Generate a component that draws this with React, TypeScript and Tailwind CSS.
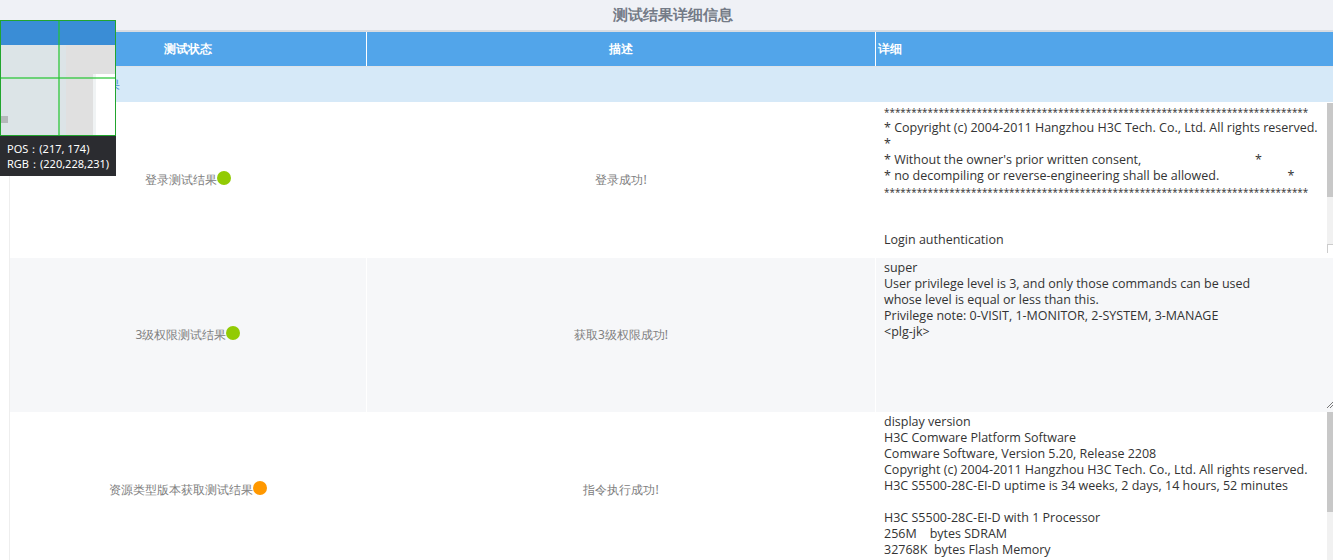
const font = '[font-family:"Microsoft YaHei","Open_Sans","Noto_Sans_CJK_SC",sans-serif]'

const stars = '*'.repeat(78)

type Row = {
  name: string
  color: string
  desc: string
  detail: string
  height: string
  bg: string
  scroll: 'button' | 'thumb' | 'none'
}

const rows: Row[] = [
  {
    name: '登录测试结果',
    color: 'bg-[#92cb04]',
    desc: '登录成功!',
    height: 'h-[156px]',
    bg: 'bg-white',
    scroll: 'button',
    detail: `${stars}
* Copyright (c) 2004-2011 Hangzhou H3C Tech. Co., Ltd. All rights reserved.
*
* Without the owner's prior written consent,                                   *
* no decompiling or reverse-engineering shall be allowed.                     *
${stars}


Login authentication`,
  },
  {
    name: '3级权限测试结果',
    color: 'bg-[#92cb04]',
    desc: '获取3级权限成功!',
    height: 'h-[154px]',
    bg: 'bg-[#f6f7f9]',
    scroll: 'none',
    detail: `super
User privilege level is 3, and only those commands can be used
whose level is equal or less than this.
Privilege note: 0-VISIT, 1-MONITOR, 2-SYSTEM, 3-MANAGE
<plg-jk>`,
  },
  {
    name: '资源类型版本获取测试结果',
    color: 'bg-[#ff9800]',
    desc: '指令执行成功!',
    height: 'h-[156px]',
    bg: 'bg-white',
    scroll: 'thumb',
    detail: `display version
H3C Comware Platform Software
Comware Software, Version 5.20, Release 2208
Copyright (c) 2004-2011 Hangzhou H3C Tech. Co., Ltd. All rights reserved.
H3C S5500-28C-EI-D uptime is 34 weeks, 2 days, 14 hours, 52 minutes

H3C S5500-28C-EI-D with 1 Processor
256M    bytes SDRAM
32768K  bytes Flash Memory`,
  },
]

function Scroll({ kind }: { kind: Row['scroll'] }) {
  if (kind === 'none') {
    return (
      <svg className="absolute right-0 bottom-[4px] size-[6px]" viewBox="0 0 6 6">
        <path d="M0 6L6 0M3 6L6 3" stroke="#777777" strokeWidth="1" fill="none" />
      </svg>
    )
  }
  if (kind === 'thumb') {
    return (
      <div className="absolute inset-y-0 right-0 w-[6px] bg-[#f1f1f1]">
        <div className="h-[100px] w-full bg-[#c8c8c8]" />
      </div>
    )
  }
  return (
    <div className="absolute top-[1px] right-0 flex h-[150px] w-[6px] flex-col bg-[#f1f1f1]">
      <div className="h-[94px] bg-[#c8c8c8]" />
      <div className="mt-auto h-[9px] border-t border-l border-[#cccccc] bg-white" />
    </div>
  )
}

export default function App() {
  return (
    <div className={`relative h-[560px] w-[1333px] overflow-hidden bg-white text-[12px] ${font}`}>
      <div className="flex h-[32px] items-center justify-center border-b-2 border-[#d8dce2] bg-[#eff1f6] pb-[2px] pl-[13px] text-[15px] font-bold text-[#747b87]">
        测试结果详细信息
      </div>
      <div className="ml-[10px] grid h-[34px] grid-cols-[357px_509px_1fr] bg-[#52a5ea] font-bold text-white">
        <div className="flex items-center justify-center border-r border-white">测试状态</div>
        <div className="flex items-center justify-center border-r border-white">描述</div>
        <div className="flex items-center pl-[2px]">详细</div>
      </div>
      <div className="ml-[10px] flex h-[36px] items-center border-t border-[#dfe3e8] bg-[#d6e9f8] pl-[62px] text-[#4a90d9]">
        测试结果
      </div>
      {rows.map((row) => (
        <div
          key={row.name}
          className={`ml-[9px] grid grid-cols-[357px_509px_1fr] border-l border-[#eeeeee] text-[#808080] ${row.height} ${row.bg}`}
        >
          <div className="flex items-center justify-center border-r border-white">
            <span>{row.name}</span>
            <span className={`-mt-[5px] size-[14px] rounded-full ${row.color}`} />
          </div>
          <div className="flex items-center justify-center border-r border-white">{row.desc}</div>
          <div className="relative overflow-hidden">
            <div className="h-full overflow-hidden pt-[2px] pl-[8px] text-[12.5px] leading-[16px] text-[#333333] [font-family:'Open_Sans','Noto_Sans',sans-serif]">
              {row.detail.split('\n').map((line, i) => (
                <div key={i} className={`h-[16px] whitespace-pre ${line === stars ? 'text-[9.9px]' : ''}`}>
                  {line}
                </div>
              ))}
            </div>
            <Scroll kind={row.scroll} />
          </div>
        </div>
      ))}

      <div className="absolute top-[20px] left-0 w-[116px]">
        <div className="relative h-[116px] overflow-hidden border border-[#22a52e] bg-[#dce4e7]">
          <div className="relative z-10 h-[24px] bg-[#3a8dd6]" />
          <div className="absolute top-[24px] right-0 bottom-0 left-[65px] bg-[#e0e0e0]" />
          <div className="absolute top-[53px] right-0 bottom-0 w-[22px] border-l-[3px] border-[#f0f3f4] bg-white" />
          <div className="absolute top-[95px] left-0 size-[7px] bg-[#b5b8ba]" />
          <div className="absolute top-0 bottom-0 left-[57px] z-20 w-[2px] bg-[#22c52e]/60" />
          <div className="absolute top-[56px] right-0 left-0 z-20 h-[2px] bg-[#22c52e]/60" />
        </div>
        <div className="flex h-[40px] flex-col justify-center bg-[#2b2c30] pl-[7px] text-[11px] leading-[15px] text-white">
          <span>POS：(217, 174)</span>
          <span>RGB：(220,228,231)</span>
        </div>
      </div>
    </div>
  )
}
